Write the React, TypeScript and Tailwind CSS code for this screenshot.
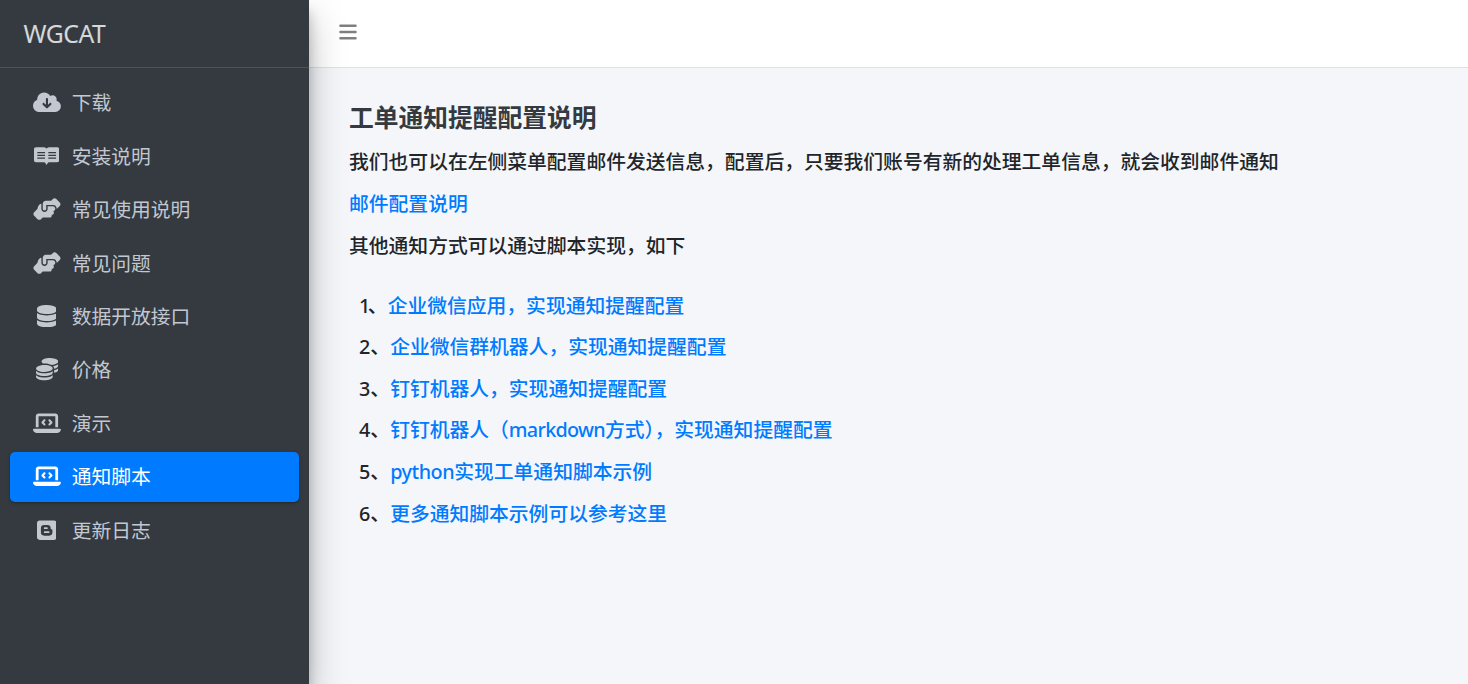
import React from "react";
import {
  FaBars,
  FaCloudArrowDown,
  FaCoins,
  FaDatabase,
  FaHandshakeAngle,
  FaLaptopCode,
} from "react-icons/fa6";
import clsx from "clsx";

const wide = "h-[22.3px] w-[27.9px]";

const BookIcon = () => (
  <svg viewBox="0 0 576 512" className="h-[22.3px] w-[25.1px]" fill="currentColor">
    <path
      fillRule="evenodd"
      d="M48 50C16 50 0 66 0 96V350C0 380 16 394 44 394H216C244 394 258 404 270 428L288 462L306 428C318 404 332 394 360 394H532C560 394 576 380 576 350V96C576 66 560 50 528 50H384C336 50 304 60 288 82C272 60 240 50 192 50ZM76 163H253V191H76ZM76 224H253V252H76ZM76 285H253V313H76ZM329 163H506V191H329ZM329 224H506V252H329ZM329 285H506V313H329Z"
    />
  </svg>
);

const BloggerIcon = () => (
  <svg viewBox="0 0 448 512" className="h-[22.3px] w-[19.5px]" fill="currentColor">
    <path
      fillRule="evenodd"
      d="M64 32H384A64 64 0 0 1 448 96V416A64 64 0 0 1 384 480H64A64 64 0 0 1 0 416V96A64 64 0 0 1 64 32ZM166 136A76 76 0 0 0 90 212V306A76 76 0 0 0 166 382H278A76 76 0 0 0 354 306V264C354 246 344 238 330 238C316 238 314 228 314 212A76 76 0 0 0 238 136ZM176 192H228A20 20 0 0 1 228 232H176A20 20 0 0 1 176 192ZM176 284H268A20 20 0 0 1 268 324H176A20 20 0 0 1 176 284Z"
    />
  </svg>
);

const menu = [
  { label: "下载", icon: <FaCloudArrowDown className={wide} /> },
  { label: "安装说明", icon: <BookIcon /> },
  { label: "常见使用说明", icon: <FaHandshakeAngle className={wide} /> },
  { label: "常见问题", icon: <FaHandshakeAngle className={wide} /> },
  { label: "数据开放接口", icon: <FaDatabase className="h-[22.3px] w-[19.5px]" /> },
  { label: "价格", icon: <FaCoins className="h-[22.3px] w-[22.3px]" /> },
  { label: "演示", icon: <FaLaptopCode className={wide} /> },
  { label: "通知脚本", icon: <FaLaptopCode className={wide} />, active: true },
  { label: "更新日志", icon: <BloggerIcon /> },
];

const scripts: React.ReactNode[] = [
  "企业微信应用，实现通知提醒配置",
  "企业微信群机器人，实现通知提醒配置",
  "钉钉机器人，实现通知提醒配置",
  <>
    钉钉机器人（<span className="tracking-[-0.7px]">markdown</span>方式），实现通知提醒配置
  </>,
  <>
    <span className="tracking-[-0.45px]">python</span>实现工单通知脚本示例
  </>,
  "更多通知脚本示例可以参考这里",
];

const Sidebar: React.FC = () => (
  <aside className="relative z-10 w-[309px] shrink-0 bg-[#343a40] shadow-[0_17px_35px_rgba(0,0,0,0.25),0_12px_12px_rgba(0,0,0,0.22)]">
    <div className="h-[68px] border-b border-[#4b545c] pl-[23.5px] text-[24.75px] leading-[67px] tracking-[-0.5px] text-white/80">
      WGCAT
    </div>
    <nav className="flex flex-col gap-[3.65px] px-[10px] pt-[10.2px]">
      {menu.map((item) => (
        <a
          key={item.label}
          href="#"
          className={clsx(
            "flex h-[49.8px] items-center rounded-[5px] pl-[21.7px]",
            item.active
              ? "bg-[#007bff] text-white shadow-[0_1px_4px_rgba(0,0,0,0.12),0_1px_2px_rgba(0,0,0,0.24)]"
              : "text-[#c2c7d0]"
          )}
        >
          <span className="flex w-[30px] justify-center pb-[1.5px]">{item.icon}</span>
          <span className="ml-[10px]">{item.label}</span>
        </a>
      ))}
    </nav>
  </aside>
);

export default function App() {
  return (
    <div className="flex h-[684px] overflow-hidden bg-[#f4f6f9] font-['Noto_Sans','Noto_Sans_CJK_SC',sans-serif] text-[19.8px] leading-[29.7px] text-[#212529]">
      <Sidebar />
      <main className="flex-1">
        <header className="flex h-[68px] items-center border-b border-[#dee2e6] bg-white pb-[3px] pl-[29px] text-[20px] text-black/50">
          <FaBars />
        </header>
        <div className="pl-10 pt-[31px] font-medium">
          <h1 className="mb-[11px] text-[24.75px] font-bold leading-[37px] text-[#343a40]">
            工单通知提醒配置说明
          </h1>
          <p className="mb-[12.3px]">
            我们也可以在左侧菜单配置邮件发送信息，配置后，只要我们账号有新的处理工单信息，就会收到邮件通知
          </p>
          <p className="mb-[12.3px]">
            <a href="#" className="text-[#007bff]">邮件配置说明</a>
          </p>
          <p>其他通知方式可以通过脚本实现，如下</p>
          <ul className="flex flex-col gap-[11.9px] pl-[10px] pt-[30px]">
            {scripts.map((title, i) => (
              <li key={i}>
                <span className={i === 0 ? "tracking-[-2.5px]" : ""}>{i + 1}</span>、
                <a href="#" className="text-[#007bff]">{title}</a>
              </li>
            ))}
          </ul>
        </div>
      </main>
    </div>
  );
}
